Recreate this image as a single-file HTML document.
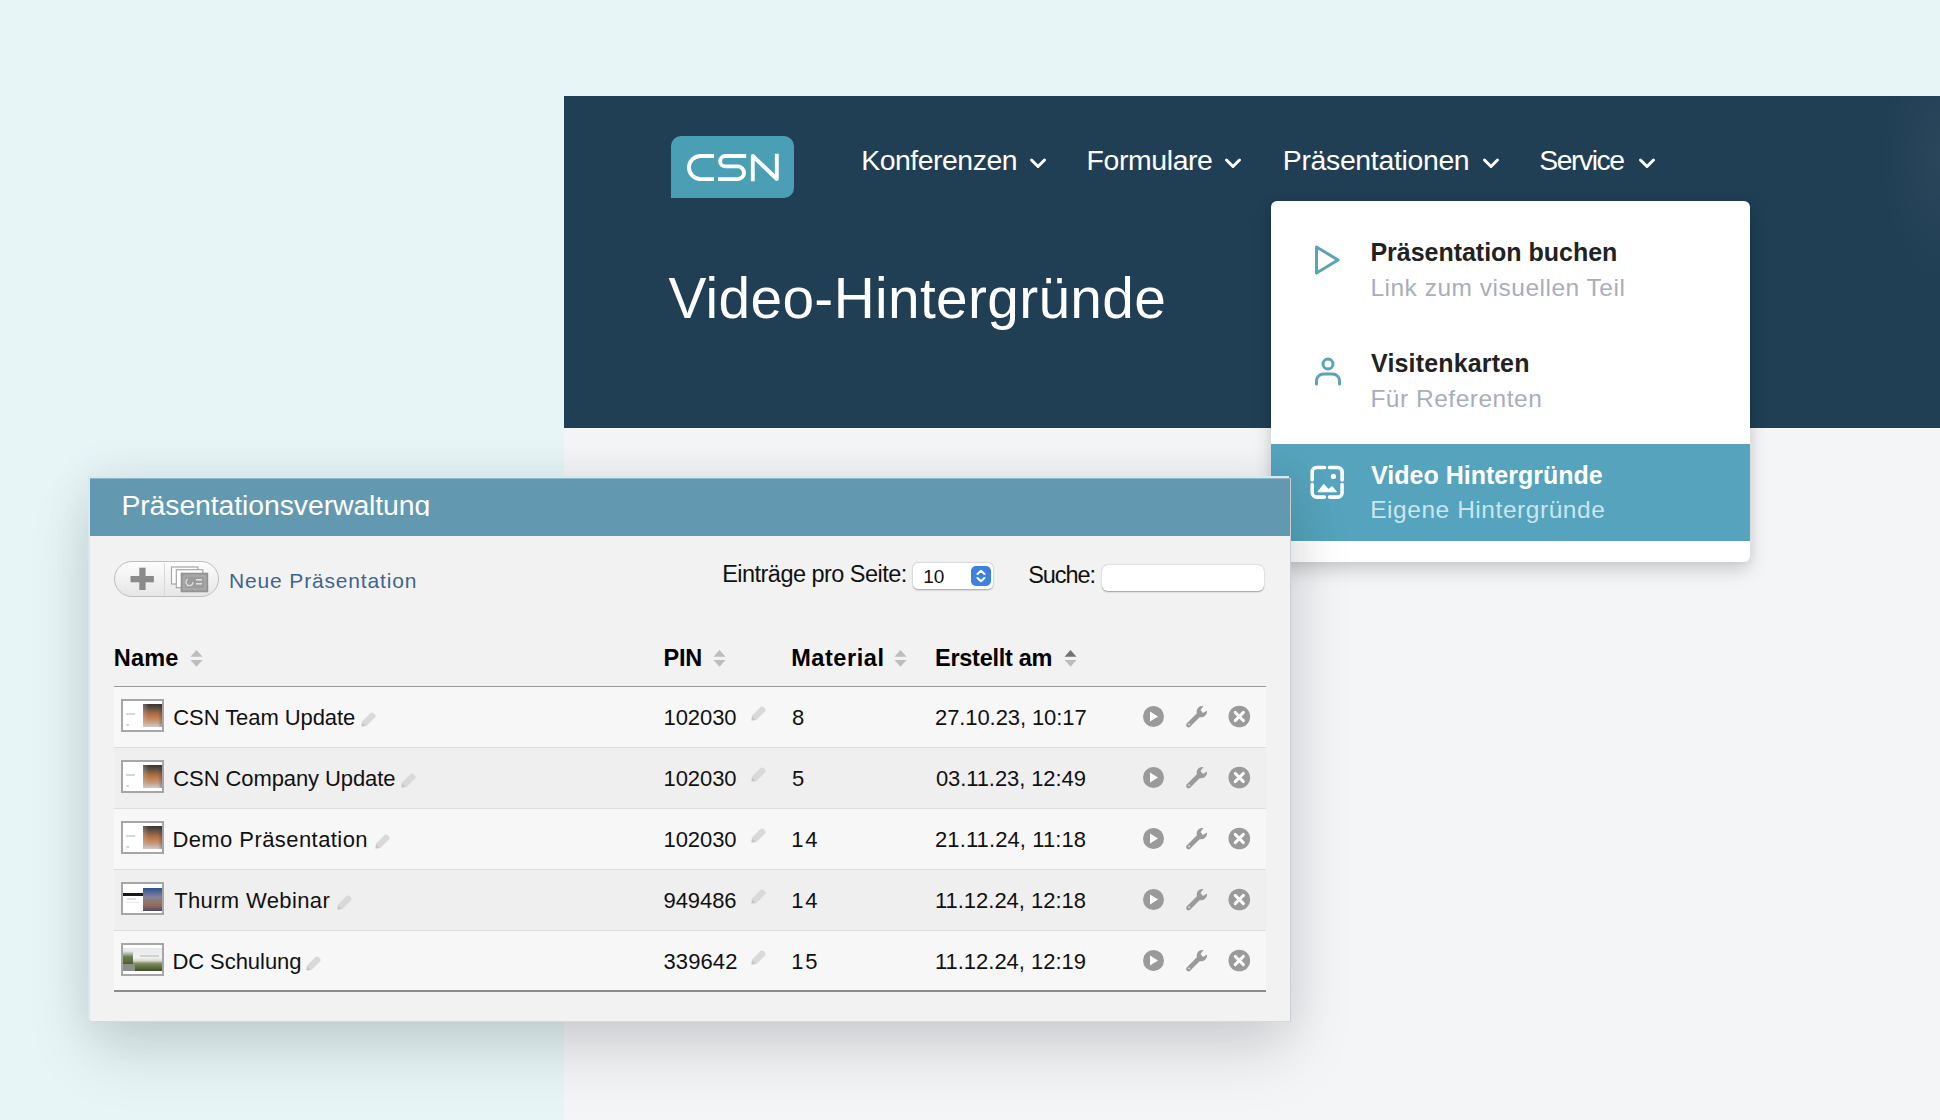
<!DOCTYPE html>
<html><head><meta charset="utf-8">
<style>
*{margin:0;padding:0;box-sizing:border-box}
html,body{width:1940px;height:1120px;overflow:hidden}
body{background:#e7f5f6;font-family:"Liberation Sans",sans-serif;position:relative}
.a{position:absolute}
.t{position:absolute;white-space:nowrap}
svg{position:absolute;overflow:visible}
</style></head><body>
<div class="a" style="left:564px;top:96px;width:1376px;height:332px;background:#203e54"></div>
<div class="a" style="left:1860px;top:96px;width:80px;height:220px;background:radial-gradient(ellipse 60px 130px at 80px 60px,rgba(255,255,255,.045),rgba(255,255,255,0))"></div>
<div class="a" style="left:564px;top:428px;width:1376px;height:692px;background:#f4f5f7"></div>
<svg style="left:0;top:0" width="1940" height="1120">
<path d="M681 136 H784 A10 10 0 0 1 794 146 V188 A10 10 0 0 1 784 198 H671 V146 A10 10 0 0 1 681 136 Z" fill="#4a9fb5"/>
<g fill="none" stroke="#fff" stroke-width="3.9" stroke-linecap="butt">
<path d="M714 156 H700.5 A11.55 11.55 0 0 0 700.5 179.1 H714"/>
<path d="M746.2 156 H725.35 A5.2 5.2 0 0 0 725.35 166.4 H737.7 A6.35 6.35 0 0 1 737.7 179.1 H718"/>
<path d="M752.8 181.3 V156 L776.8 179 V153.8" stroke-linejoin="round"/>
</g>
</svg>
<div class="t" style="left:861.2px;top:146.4px;font-size:28.4px;line-height:28.4px;color:#fff;letter-spacing:-0.468px;">Konferenzen</div>
<svg style="left:1029.7px;top:158px" width="16" height="11"><polyline points="1.5,2 8,8.5 14.5,2" fill="none" stroke="#fff" stroke-width="3" stroke-linecap="round" stroke-linejoin="round"/></svg>
<div class="t" style="left:1086.6px;top:146.4px;font-size:28.4px;line-height:28.4px;color:#fff;letter-spacing:-0.383px;">Formulare</div>
<svg style="left:1225px;top:158px" width="16" height="11"><polyline points="1.5,2 8,8.5 14.5,2" fill="none" stroke="#fff" stroke-width="3" stroke-linecap="round" stroke-linejoin="round"/></svg>
<div class="t" style="left:1282.8px;top:146.4px;font-size:28.4px;line-height:28.4px;color:#fff;letter-spacing:-0.318px;">Präsentationen</div>
<svg style="left:1482.5px;top:158px" width="16" height="11"><polyline points="1.5,2 8,8.5 14.5,2" fill="none" stroke="#fff" stroke-width="3" stroke-linecap="round" stroke-linejoin="round"/></svg>
<div class="t" style="left:1539.3px;top:146.4px;font-size:28.4px;line-height:28.4px;color:#fff;letter-spacing:-1.5px;">Service</div>
<svg style="left:1639px;top:158px" width="16" height="11"><polyline points="1.5,2 8,8.5 14.5,2" fill="none" stroke="#fff" stroke-width="3" stroke-linecap="round" stroke-linejoin="round"/></svg>
<div class="t" style="left:668.4px;top:270.5px;font-size:56.8px;line-height:56.8px;color:#fff;letter-spacing:0.349px;">Video-Hintergründe</div>
<div class="a" style="left:1271px;top:201px;width:479px;height:361px;background:#fff;border-radius:6px;box-shadow:0 8px 18px rgba(0,0,0,.17),0 0 10px rgba(0,0,0,.06)"></div>
<div class="a" style="left:1271px;top:444px;width:479px;height:97px;background:#55a3bc"></div>
<div class="t" style="left:1370.4px;top:240.0px;font-size:25px;line-height:25px;color:#222;font-weight:bold;letter-spacing:-0.02px;">Präsentation buchen</div>
<div class="t" style="left:1370.4px;top:275.8px;font-size:24.5px;line-height:24.5px;color:#a8aebb;letter-spacing:0.507px;">Link zum visuellen Teil</div>
<div class="t" style="left:1371.1px;top:351.3px;font-size:25px;line-height:25px;color:#222;font-weight:bold;letter-spacing:0.15px;">Visitenkarten</div>
<div class="t" style="left:1370.4px;top:386.9px;font-size:24.5px;line-height:24.5px;color:#a8aebb;letter-spacing:0.512px;">Für Referenten</div>
<div class="t" style="left:1371.1px;top:462.5px;font-size:25px;line-height:25px;color:#fff;font-weight:bold;letter-spacing:0.0px;">Video Hintergründe</div>
<div class="t" style="left:1370.2px;top:498.2px;font-size:24.5px;line-height:24.5px;color:#c9e6ef;letter-spacing:0.55px;">Eigene Hintergründe</div>
<svg style="left:0;top:0" width="1940" height="1120">
<path d="M1316.5 247 L1338 260 L1316.5 273 Z" fill="none" stroke="#5aa3b8" stroke-width="3" stroke-linejoin="round"/>
<circle cx="1328" cy="364" r="5" fill="none" stroke="#5aa3b8" stroke-width="3"/>
<path d="M1316.5 384 V381 A7 7 0 0 1 1323.5 374 H1332.5 A7 7 0 0 1 1339.5 381 V384" fill="none" stroke="#5aa3b8" stroke-width="3" stroke-linecap="round"/>
<g fill="none" stroke="#fff" stroke-width="3.6" stroke-linecap="round">
<path d="M1312.2 480 V472 A4.5 4.5 0 0 1 1316.7 467.5 H1324.5"/>
<path d="M1329.5 467.5 H1337.6 A4.5 4.5 0 0 1 1342.1 472 V480"/>
<path d="M1342.1 484.5 V492.6 A4.5 4.5 0 0 1 1337.6 497.1 H1329.5"/>
<path d="M1324.5 497.1 H1316.7 A4.5 4.5 0 0 1 1312.2 492.6 V484.5"/>
</g>
<circle cx="1333.4" cy="476.4" r="2.6" fill="#fff"/>
<path d="M1317.9 491.8 L1323.8 484.3 L1328.3 489.3 L1332.2 486.6 L1336.6 491.8 Z" fill="#fff" stroke="#fff" stroke-width="1" stroke-linejoin="round"/>
</svg>
<div class="a" style="left:90px;top:478px;width:1201px;height:544px;background:#f2f2f2;border-right:1px solid #c9ced1;border-bottom:1px solid #d5d9db;box-shadow:-2px -2px 0 0 #d9e8ec,0 30px 60px rgba(0,0,0,.13),0 0 45px rgba(0,30,50,.09)"></div>
<div class="a" style="left:90px;top:478px;width:1200px;height:58px;background:#6399b0;border-top:1px solid #8fb8c8"></div>
<div class="t" style="left:121.4px;top:490.8px;font-size:28.4px;line-height:28.4px;color:#fff;letter-spacing:-0.09px;height:25.5px;overflow:hidden">Präsentationsverwaltung</div>
<div class="a" style="left:114px;top:561px;width:105px;height:36px;border-radius:18px;border:1.5px solid #bdbdbd;background:linear-gradient(#fdfdfd,#e6e6e6)"></div>
<div class="a" style="left:164px;top:563px;width:1px;height:32px;background:#d8d8d8"></div>
<svg style="left:0;top:0" width="1940" height="1120">
<rect x="139.3" y="567.7" width="6.3" height="22.3" fill="#8a8a8a"/>
<rect x="130.5" y="576" width="23.4" height="6.3" fill="#8a8a8a"/>
<rect x="171.5" y="567" width="26.5" height="17" fill="#fff" stroke="#a6a6a6" stroke-width="1.2"/>
<rect x="176.3" y="569.7" width="26.5" height="18" fill="#fff" stroke="#a6a6a6" stroke-width="1.2"/>
<rect x="181.3" y="573.3" width="26.3" height="18.4" fill="#9c9c9c" stroke="#8f8f8f" stroke-width="1.2"/>
<rect x="184" y="576" width="21" height="13" fill="none" stroke="#b9b9b9" stroke-width="0.8"/>
<path d="M188 579 A3.5 3.5 0 1 0 193 582" fill="none" stroke="#e0e0e0" stroke-width="1.2"/>
<rect x="196" y="579" width="6" height="1.6" fill="#e0e0e0"/><rect x="196" y="583" width="6" height="1.6" fill="#e0e0e0"/>
</svg>
<div class="t" style="left:229.1px;top:569.7px;font-size:21px;line-height:21px;color:#3d6590;letter-spacing:0.833px;">Neue Präsentation</div>
<div class="t" style="left:722.2px;top:563.0px;font-size:23.5px;line-height:23.5px;color:#111;letter-spacing:-0.53px;">Einträge pro Seite:</div>
<div class="a" style="left:913px;top:563px;width:80px;height:26px;border-radius:5px;background:#fff;box-shadow:0 0.5px 2px rgba(0,0,0,.35)"></div>
<div class="a" style="left:971px;top:566px;width:20px;height:20px;border-radius:5px;background:#3c80e0"></div>
<svg style="left:971px;top:566px" width="20" height="20"><polyline points="6.5,8 10,4.8 13.5,8" fill="none" stroke="#fff" stroke-width="2.1" stroke-linecap="round" stroke-linejoin="round"/><polyline points="6.5,12 10,15.2 13.5,12" fill="none" stroke="#fff" stroke-width="2.1" stroke-linecap="round" stroke-linejoin="round"/></svg>
<div class="t" style="left:923.2px;top:566.5px;font-size:19px;line-height:19px;color:#111;letter-spacing:0.0px;">10</div>
<div class="t" style="left:1028.2px;top:563.8px;font-size:23.5px;line-height:23.5px;color:#111;letter-spacing:-1.044px;">Suche:</div>
<div class="a" style="left:1102px;top:565px;width:162px;height:26px;border-radius:6px;background:#fff;box-shadow:0 0.5px 1.5px rgba(0,0,0,.35)"></div>
<div class="t" style="left:113.7px;top:647.1px;font-size:23.5px;line-height:23.5px;color:#000;font-weight:bold;letter-spacing:0.24px;">Name</div>
<svg style="left:189.5px;top:650px" width="13" height="17"><path d="M0.5 6.8 L6.5 0 L12.5 6.8 Z" fill="#bdbdbd"/><path d="M0.5 10 L6.5 16.8 L12.5 10 Z" fill="#bdbdbd"/></svg>
<div class="t" style="left:663.5px;top:647.1px;font-size:23.5px;line-height:23.5px;color:#000;font-weight:bold;letter-spacing:-0.18px;">PIN</div>
<svg style="left:712.5px;top:650px" width="13" height="17"><path d="M0.5 6.8 L6.5 0 L12.5 6.8 Z" fill="#bdbdbd"/><path d="M0.5 10 L6.5 16.8 L12.5 10 Z" fill="#bdbdbd"/></svg>
<div class="t" style="left:791.2px;top:647.1px;font-size:23.5px;line-height:23.5px;color:#000;font-weight:bold;letter-spacing:0.566px;">Material</div>
<svg style="left:894px;top:650px" width="13" height="17"><path d="M0.5 6.8 L6.5 0 L12.5 6.8 Z" fill="#bdbdbd"/><path d="M0.5 10 L6.5 16.8 L12.5 10 Z" fill="#bdbdbd"/></svg>
<div class="t" style="left:935.0px;top:647.1px;font-size:23.5px;line-height:23.5px;color:#000;font-weight:bold;letter-spacing:-0.27px;">Erstellt am</div>
<svg style="left:1063.5px;top:650px" width="13" height="17"><path d="M0.5 6.8 L6.5 0 L12.5 6.8 Z" fill="#737373"/><path d="M0.5 10 L6.5 16.8 L12.5 10 Z" fill="#bdbdbd"/></svg>
<div class="a" style="left:114px;top:685.5px;width:1152px;height:2px;background:#999"></div>
<div class="a" style="left:114px;top:687px;width:1152px;height:60px;background:#f7f7f7"></div>
<div class="a" style="left:114px;top:747px;width:1152px;height:1px;background:#dcdcdc"></div>
<div class="t" style="left:173.3px;top:706.5px;font-size:22px;line-height:22px;color:#111;letter-spacing:-0.077px;">CSN Team Update</div>
<div class="t" style="left:663.5px;top:706.5px;font-size:22px;line-height:22px;color:#111;letter-spacing:-0.072px;">102030</div>
<div class="t" style="left:792.1px;top:706.5px;font-size:22px;line-height:22px;color:#111;letter-spacing:3.24px;">8</div>
<div class="t" style="left:935.0px;top:706.5px;font-size:22px;line-height:22px;color:#111;letter-spacing:-0.09px;">27.10.23, 10:17</div>
<div class="a" style="left:121px;top:699.3px;width:43px;height:32.5px;border:2px solid #a6a6a6;background:#fff;overflow:hidden"><div class="a" style="left:19.5px;top:3px;width:20px;height:23px;background:linear-gradient(180deg,#3a3431 0%,#625044 20%,#a86c42 42%,#c4804e 60%,#c4a088 80%,#d4cccc 100%)"></div><div class="a" style="left:19.5px;top:3px;width:20px;height:23px;background:linear-gradient(90deg,rgba(200,195,195,.35) 0%,rgba(0,0,0,0) 30%,rgba(0,0,0,0) 75%,rgba(40,36,34,.35) 100%)"></div><div class="a" style="left:3px;top:12px;width:9px;height:2px;background:#d8d8d8"></div><div class="a" style="left:3px;top:23px;width:3px;height:2px;background:#d0dcd8"></div></div>
<svg style="left:360px;top:710.5px" width="17" height="17"><g style="filter:blur(0.5px)"><path d="M1.5 15.5 L2 10.5 L10.5 2 Q12 0.8 13.5 2 L15 3.5 Q16.2 5 15 6.5 L6.5 15 Z" fill="#d9d9d9"/><path d="M1.5 15.5 L2 11.5 L5.5 15 Z" fill="#c4c4c4"/></g></svg>
<svg style="left:749.5px;top:704.5px" width="17" height="17"><g style="filter:blur(0.5px)"><path d="M1.5 15.5 L2 10.5 L10.5 2 Q12 0.8 13.5 2 L15 3.5 Q16.2 5 15 6.5 L6.5 15 Z" fill="#d9d9d9"/><path d="M1.5 15.5 L2 11.5 L5.5 15 Z" fill="#c4c4c4"/></g></svg>
<svg style="left:0;top:0" width="1940" height="1120">
<circle cx="1153.5" cy="716.5" r="10.5" fill="#9a9a9a"/><path d="M1150 711.5 L1158 716.5 L1150 721.5 Z" fill="#fff"/>
<path d="M1188.5 725.0 L1199 714.5" stroke="#9a9a9a" stroke-width="4.6" stroke-linecap="round"/><circle cx="1189.2" cy="724.3" r="0.9" fill="#e9e9e9"/>
<path d="M1196.5 712.0 A6 6 0 0 1 1203.5 706.0 L1200.5 710.0 L1203 713.0 L1207 710.5 A6 6 0 0 1 1199 717.0 Z" fill="#9a9a9a"/>
<circle cx="1239.3" cy="716.5" r="10.8" fill="#9a9a9a"/>
<path d="M1235.2 712.4 L1243.4 720.6 M1243.4 712.4 L1235.2 720.6" stroke="#fff" stroke-width="2.9" stroke-linecap="round"/>
</svg>
<div class="a" style="left:114px;top:748px;width:1152px;height:60px;background:#efefef"></div>
<div class="a" style="left:114px;top:808px;width:1152px;height:1px;background:#dcdcdc"></div>
<div class="t" style="left:173.3px;top:767.5px;font-size:22px;line-height:22px;color:#111;letter-spacing:-0.095px;">CSN Company Update</div>
<div class="t" style="left:663.5px;top:767.5px;font-size:22px;line-height:22px;color:#111;letter-spacing:-0.072px;">102030</div>
<div class="t" style="left:792.1px;top:767.5px;font-size:22px;line-height:22px;color:#111;letter-spacing:3.24px;">5</div>
<div class="t" style="left:935.9px;top:767.5px;font-size:22px;line-height:22px;color:#111;letter-spacing:-0.09px;">03.11.23, 12:49</div>
<div class="a" style="left:121px;top:760.3px;width:43px;height:32.5px;border:2px solid #a6a6a6;background:#fff;overflow:hidden"><div class="a" style="left:19.5px;top:3px;width:20px;height:23px;background:linear-gradient(180deg,#3a3431 0%,#625044 20%,#a86c42 42%,#c4804e 60%,#c4a088 80%,#d4cccc 100%)"></div><div class="a" style="left:19.5px;top:3px;width:20px;height:23px;background:linear-gradient(90deg,rgba(200,195,195,.35) 0%,rgba(0,0,0,0) 30%,rgba(0,0,0,0) 75%,rgba(40,36,34,.35) 100%)"></div><div class="a" style="left:3px;top:12px;width:9px;height:2px;background:#d8d8d8"></div><div class="a" style="left:3px;top:23px;width:3px;height:2px;background:#d0dcd8"></div></div>
<svg style="left:399.7px;top:771.5px" width="17" height="17"><g style="filter:blur(0.5px)"><path d="M1.5 15.5 L2 10.5 L10.5 2 Q12 0.8 13.5 2 L15 3.5 Q16.2 5 15 6.5 L6.5 15 Z" fill="#d9d9d9"/><path d="M1.5 15.5 L2 11.5 L5.5 15 Z" fill="#c4c4c4"/></g></svg>
<svg style="left:749.5px;top:765.5px" width="17" height="17"><g style="filter:blur(0.5px)"><path d="M1.5 15.5 L2 10.5 L10.5 2 Q12 0.8 13.5 2 L15 3.5 Q16.2 5 15 6.5 L6.5 15 Z" fill="#d9d9d9"/><path d="M1.5 15.5 L2 11.5 L5.5 15 Z" fill="#c4c4c4"/></g></svg>
<svg style="left:0;top:0" width="1940" height="1120">
<circle cx="1153.5" cy="777.5" r="10.5" fill="#9a9a9a"/><path d="M1150 772.5 L1158 777.5 L1150 782.5 Z" fill="#fff"/>
<path d="M1188.5 786.0 L1199 775.5" stroke="#9a9a9a" stroke-width="4.6" stroke-linecap="round"/><circle cx="1189.2" cy="785.3" r="0.9" fill="#e9e9e9"/>
<path d="M1196.5 773.0 A6 6 0 0 1 1203.5 767.0 L1200.5 771.0 L1203 774.0 L1207 771.5 A6 6 0 0 1 1199 778.0 Z" fill="#9a9a9a"/>
<circle cx="1239.3" cy="777.5" r="10.8" fill="#9a9a9a"/>
<path d="M1235.2 773.4 L1243.4 781.6 M1243.4 773.4 L1235.2 781.6" stroke="#fff" stroke-width="2.9" stroke-linecap="round"/>
</svg>
<div class="a" style="left:114px;top:809px;width:1152px;height:60px;background:#f7f7f7"></div>
<div class="a" style="left:114px;top:869px;width:1152px;height:1px;background:#dcdcdc"></div>
<div class="t" style="left:172.4px;top:828.5px;font-size:22px;line-height:22px;color:#111;letter-spacing:0.427px;">Demo Präsentation</div>
<div class="t" style="left:663.5px;top:828.5px;font-size:22px;line-height:22px;color:#111;letter-spacing:-0.072px;">102030</div>
<div class="t" style="left:791.2px;top:828.5px;font-size:22px;line-height:22px;color:#111;letter-spacing:1.8px;">14</div>
<div class="t" style="left:935.0px;top:828.5px;font-size:22px;line-height:22px;color:#111;letter-spacing:0.103px;">21.11.24, 11:18</div>
<div class="a" style="left:121px;top:821.3px;width:43px;height:32.5px;border:2px solid #a6a6a6;background:#fff;overflow:hidden"><div class="a" style="left:19.5px;top:3px;width:20px;height:23px;background:linear-gradient(180deg,#3a3431 0%,#625044 20%,#a86c42 42%,#c4804e 60%,#c4a088 80%,#d4cccc 100%)"></div><div class="a" style="left:19.5px;top:3px;width:20px;height:23px;background:linear-gradient(90deg,rgba(200,195,195,.35) 0%,rgba(0,0,0,0) 30%,rgba(0,0,0,0) 75%,rgba(40,36,34,.35) 100%)"></div><div class="a" style="left:3px;top:12px;width:9px;height:2px;background:#d8d8d8"></div><div class="a" style="left:3px;top:23px;width:3px;height:2px;background:#d0dcd8"></div></div>
<svg style="left:373.5px;top:832.5px" width="17" height="17"><g style="filter:blur(0.5px)"><path d="M1.5 15.5 L2 10.5 L10.5 2 Q12 0.8 13.5 2 L15 3.5 Q16.2 5 15 6.5 L6.5 15 Z" fill="#d9d9d9"/><path d="M1.5 15.5 L2 11.5 L5.5 15 Z" fill="#c4c4c4"/></g></svg>
<svg style="left:749.5px;top:826.5px" width="17" height="17"><g style="filter:blur(0.5px)"><path d="M1.5 15.5 L2 10.5 L10.5 2 Q12 0.8 13.5 2 L15 3.5 Q16.2 5 15 6.5 L6.5 15 Z" fill="#d9d9d9"/><path d="M1.5 15.5 L2 11.5 L5.5 15 Z" fill="#c4c4c4"/></g></svg>
<svg style="left:0;top:0" width="1940" height="1120">
<circle cx="1153.5" cy="838.5" r="10.5" fill="#9a9a9a"/><path d="M1150 833.5 L1158 838.5 L1150 843.5 Z" fill="#fff"/>
<path d="M1188.5 847.0 L1199 836.5" stroke="#9a9a9a" stroke-width="4.6" stroke-linecap="round"/><circle cx="1189.2" cy="846.3" r="0.9" fill="#e9e9e9"/>
<path d="M1196.5 834.0 A6 6 0 0 1 1203.5 828.0 L1200.5 832.0 L1203 835.0 L1207 832.5 A6 6 0 0 1 1199 839.0 Z" fill="#9a9a9a"/>
<circle cx="1239.3" cy="838.5" r="10.8" fill="#9a9a9a"/>
<path d="M1235.2 834.4 L1243.4 842.6 M1243.4 834.4 L1235.2 842.6" stroke="#fff" stroke-width="2.9" stroke-linecap="round"/>
</svg>
<div class="a" style="left:114px;top:870px;width:1152px;height:60px;background:#efefef"></div>
<div class="a" style="left:114px;top:930px;width:1152px;height:1px;background:#dcdcdc"></div>
<div class="t" style="left:174.2px;top:889.5px;font-size:22px;line-height:22px;color:#111;letter-spacing:0.36px;">Thurm Webinar</div>
<div class="t" style="left:663.5px;top:889.5px;font-size:22px;line-height:22px;color:#111;letter-spacing:-0.072px;">949486</div>
<div class="t" style="left:791.2px;top:889.5px;font-size:22px;line-height:22px;color:#111;letter-spacing:1.8px;">14</div>
<div class="t" style="left:935.0px;top:889.5px;font-size:22px;line-height:22px;color:#111;letter-spacing:-0.026px;">11.12.24, 12:18</div>
<div class="a" style="left:121px;top:882.3px;width:43px;height:32.5px;border:2px solid #a6a6a6;background:#fff;overflow:hidden"><div class="a" style="left:0;top:8.5px;width:21px;height:3.5px;background:#1a1a1a"></div><div class="a" style="left:4px;top:14px;width:9px;height:1.5px;background:#e0e0e0"></div><div class="a" style="left:3px;top:17.5px;width:13px;height:1.5px;background:#e6e6e6"></div><div class="a" style="left:19.5px;top:3.5px;width:20px;height:23px;background:linear-gradient(180deg,#2f4f86 0%,#5a6e98 22%,#8a8098 40%,#8a7a6a 60%,#9a6a58 75%,#4a4a6a 100%)"></div></div>
<svg style="left:335.8px;top:893.5px" width="17" height="17"><g style="filter:blur(0.5px)"><path d="M1.5 15.5 L2 10.5 L10.5 2 Q12 0.8 13.5 2 L15 3.5 Q16.2 5 15 6.5 L6.5 15 Z" fill="#d9d9d9"/><path d="M1.5 15.5 L2 11.5 L5.5 15 Z" fill="#c4c4c4"/></g></svg>
<svg style="left:749.5px;top:887.5px" width="17" height="17"><g style="filter:blur(0.5px)"><path d="M1.5 15.5 L2 10.5 L10.5 2 Q12 0.8 13.5 2 L15 3.5 Q16.2 5 15 6.5 L6.5 15 Z" fill="#d9d9d9"/><path d="M1.5 15.5 L2 11.5 L5.5 15 Z" fill="#c4c4c4"/></g></svg>
<svg style="left:0;top:0" width="1940" height="1120">
<circle cx="1153.5" cy="899.5" r="10.5" fill="#9a9a9a"/><path d="M1150 894.5 L1158 899.5 L1150 904.5 Z" fill="#fff"/>
<path d="M1188.5 908.0 L1199 897.5" stroke="#9a9a9a" stroke-width="4.6" stroke-linecap="round"/><circle cx="1189.2" cy="907.3" r="0.9" fill="#e9e9e9"/>
<path d="M1196.5 895.0 A6 6 0 0 1 1203.5 889.0 L1200.5 893.0 L1203 896.0 L1207 893.5 A6 6 0 0 1 1199 900.0 Z" fill="#9a9a9a"/>
<circle cx="1239.3" cy="899.5" r="10.8" fill="#9a9a9a"/>
<path d="M1235.2 895.4 L1243.4 903.6 M1243.4 895.4 L1235.2 903.6" stroke="#fff" stroke-width="2.9" stroke-linecap="round"/>
</svg>
<div class="a" style="left:114px;top:931px;width:1152px;height:60px;background:#f7f7f7"></div>
<div class="t" style="left:172.4px;top:950.5px;font-size:22px;line-height:22px;color:#111;letter-spacing:-0.054px;">DC Schulung</div>
<div class="t" style="left:663.5px;top:950.5px;font-size:22px;line-height:22px;color:#111;letter-spacing:0.108px;">339642</div>
<div class="t" style="left:791.2px;top:950.5px;font-size:22px;line-height:22px;color:#111;letter-spacing:1.8px;">15</div>
<div class="t" style="left:935.0px;top:950.5px;font-size:22px;line-height:22px;color:#111;letter-spacing:-0.026px;">11.12.24, 12:19</div>
<div class="a" style="left:121px;top:943.3px;width:43px;height:32.5px;border:2px solid #a6a6a6;background:#fff;overflow:hidden"><div class="a" style="left:0;top:2.5px;width:40px;height:23px;background:linear-gradient(180deg,#e4e6e8 0%,#f2f3f3 40%,#d8dccf 55%,#7c8a5c 68%,#5c6c3e 85%,#3e4a2c 100%)"></div><div class="a" style="left:0;top:6px;width:10px;height:13px;background:linear-gradient(180deg,rgba(120,140,90,0) 0%,rgba(90,110,60,.9) 45%,rgba(70,90,45,.9) 100%)"></div><div class="a" style="left:0;top:19px;width:12px;height:6.5px;background:#8a8f88"></div><div class="a" style="left:17px;top:10px;width:19px;height:1.5px;background:#cfd2d0"></div></div>
<svg style="left:305.4px;top:954.5px" width="17" height="17"><g style="filter:blur(0.5px)"><path d="M1.5 15.5 L2 10.5 L10.5 2 Q12 0.8 13.5 2 L15 3.5 Q16.2 5 15 6.5 L6.5 15 Z" fill="#d9d9d9"/><path d="M1.5 15.5 L2 11.5 L5.5 15 Z" fill="#c4c4c4"/></g></svg>
<svg style="left:749.5px;top:948.5px" width="17" height="17"><g style="filter:blur(0.5px)"><path d="M1.5 15.5 L2 10.5 L10.5 2 Q12 0.8 13.5 2 L15 3.5 Q16.2 5 15 6.5 L6.5 15 Z" fill="#d9d9d9"/><path d="M1.5 15.5 L2 11.5 L5.5 15 Z" fill="#c4c4c4"/></g></svg>
<svg style="left:0;top:0" width="1940" height="1120">
<circle cx="1153.5" cy="960.5" r="10.5" fill="#9a9a9a"/><path d="M1150 955.5 L1158 960.5 L1150 965.5 Z" fill="#fff"/>
<path d="M1188.5 969.0 L1199 958.5" stroke="#9a9a9a" stroke-width="4.6" stroke-linecap="round"/><circle cx="1189.2" cy="968.3" r="0.9" fill="#e9e9e9"/>
<path d="M1196.5 956.0 A6 6 0 0 1 1203.5 950.0 L1200.5 954.0 L1203 957.0 L1207 954.5 A6 6 0 0 1 1199 961.0 Z" fill="#9a9a9a"/>
<circle cx="1239.3" cy="960.5" r="10.8" fill="#9a9a9a"/>
<path d="M1235.2 956.4 L1243.4 964.6 M1243.4 956.4 L1235.2 964.6" stroke="#fff" stroke-width="2.9" stroke-linecap="round"/>
</svg>
<div class="a" style="left:114px;top:990px;width:1152px;height:2px;background:#8c8c8c"></div>
</body></html>
